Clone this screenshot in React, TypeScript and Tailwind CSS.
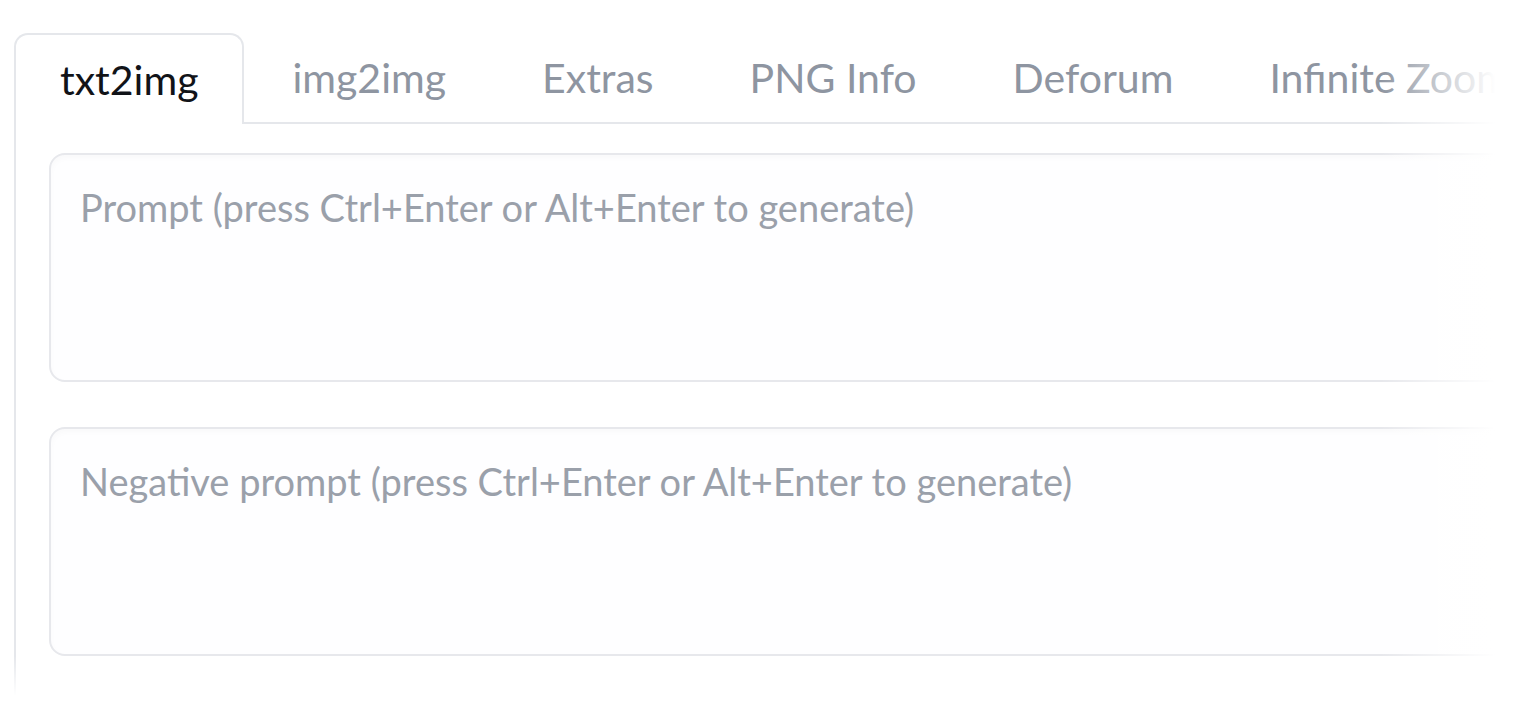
const tabs = ['txt2img', 'img2img', 'Extras', 'PNG Info', 'Deforum', 'Infinite Zoom'];

function PromptBox({placeholder}: {placeholder: string}) {
  return (
    <div className="h-[229px] w-[1520px] shrink-0 rounded-[16px] border-2 border-[#e7e8ec] bg-[#fefeff] px-[29px] pt-[30px] shadow-[inset_0_3px_6px_rgba(0,0,0,0.025)]">
      <span className="text-[38px] leading-[45px] text-[#9aa0aa]">{placeholder}</span>
    </div>
  );
}

export default function App() {
  return (
    <div
      className="relative h-[706px] w-[1540px] overflow-hidden bg-white pl-[14px] pt-[33px]"
      style={{fontFamily: 'Lato, "Liberation Sans", sans-serif'}}
    >
      <div className="flex h-[91px] items-stretch border-b-2 border-[#e5e7eb]">
        {tabs.map((tab, i) =>
          i === 0 ? (
            <div
              key={tab}
              className="-mb-[2px] flex items-center rounded-t-[14px] border-2 border-b-0 border-[#e5e7eb] bg-white px-[44px] text-[41px] text-[#111318]"
            >
              {tab}
            </div>
          ) : (
            <div
              key={tab}
              className="flex items-center whitespace-nowrap px-[48px] text-[41px] text-[#8e95a1]"
            >
              {tab}
            </div>
          ),
        )}
      </div>
      <div className="flex h-[600px] flex-col gap-[45px] border-l-2 border-[#e5e7eb] pl-[33px] pt-[29px]">
        <PromptBox placeholder="Prompt (press Ctrl+Enter or Alt+Enter to generate)" />
        <PromptBox placeholder="Negative prompt (press Ctrl+Enter or Alt+Enter to generate)" />
      </div>

      {/* fade-outs at the screenshot edges */}
      <div className="pointer-events-none absolute inset-y-0 right-0 w-[160px] bg-[linear-gradient(to_right,rgba(255,255,255,0)_0%,#ffffff_72%)]" />
      <div className="pointer-events-none absolute bottom-0 left-0 h-[50px] w-[40px] bg-[linear-gradient(to_bottom,rgba(255,255,255,0)_0%,#ffffff_80%)]" />
    </div>
  );
}
